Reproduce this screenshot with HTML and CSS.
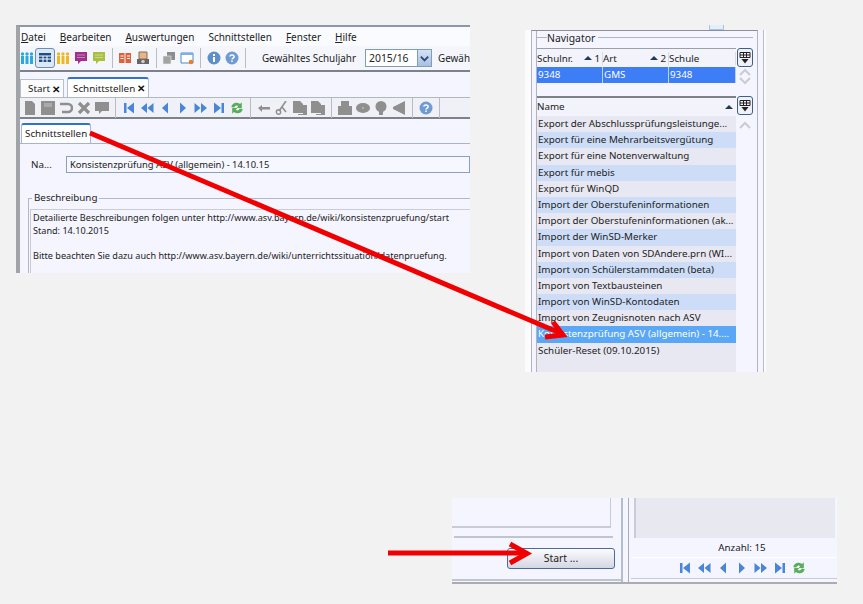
FILE: index.html
```html
<!DOCTYPE html>
<html>
<head>
    <title>Schnittstellen</title>
    <link rel="stylesheet" href="styles.css">
</head>
<body>
    <svg class="defs" width="0" height="0">
        <symbol id="first" viewBox="0 0 14 14"><path d="M2 2h2.500v10H2zM12 1.500v11L5 7z" fill="#4a86d8"/></symbol>
        <symbol id="fastback" viewBox="0 0 14 14"><path d="M7 2v10L1 7zM13.500 2v10L7.500 7z" fill="#4a86d8"/></symbol>
        <symbol id="prev" viewBox="0 0 14 14"><path d="M10 1.500v11L4 7z" fill="#4a86d8"/></symbol>
        <symbol id="next" viewBox="0 0 14 14"><path d="M4 1.500v11L10 7z" fill="#4a86d8"/></symbol>
        <symbol id="fastnext" viewBox="0 0 14 14"><path d="M.5 2v10L6.500 7zM7 2v10L13 7z" fill="#4a86d8"/></symbol>
        <symbol id="last" viewBox="0 0 14 14"><path d="M2 1.500v11L9 7zM9.500 2H12v10H9.500z" fill="#4a86d8"/></symbol>
        <symbol id="refresh" viewBox="0 0 16 16"><path d="M1.500 7C2 2.500 7.500 .5 11.500 3.500L13.500 1.500v6.500H7.500L9.500 6C7.500 4.500 5.500 5.500 5 7.500zM14.500 9c-.5 4.500-6 6.500-10 3.500L2.500 14.500V8h6L6.500 10c2 1.500 4 .5 4.500-1.500z" fill="#58ad58"/></symbol>
        <symbol id="people" viewBox="0 0 14 14"><path d="M1 5h3v8H1zM5.500 5h3v8h-3zM10 5h3v8h-3z" fill="currentColor"/><circle cx="2.500" cy="3" r="1.700" fill="currentColor"/><circle cx="7" cy="3" r="1.700" fill="currentColor"/><circle cx="11.500" cy="3" r="1.700" fill="currentColor"/></symbol>
        <symbol id="speech" viewBox="0 0 14 14"><path d="M1 1h12v9H7l-3 3v-3H1z" fill="currentColor"/><path d="M3 4h8M3 6.500h8" stroke="#fff" opacity=".4"/></symbol>
        <symbol id="table" viewBox="0 0 14 14"><path d="M1 2h12v9H1z" fill="#1d4f86"/><path d="M1 5h12M1 8h12M5 5v6M9 5v6" stroke="#fff"/></symbol>
        <symbol id="book" viewBox="0 0 14 14"><path d="M1 2h5.500v10H1zM7.500 2H13v10H7.500z" fill="#e0603a"/><path d="M2.500 5h3M2.500 7.500h3M9 5h3M9 7.500h3" stroke="#fff"/></symbol>
        <symbol id="camera" viewBox="0 0 14 14"><path d="M3 1h8v7H3z" fill="#e8b48a" stroke="#8a6a50"/><path d="M1 8h12v5H1z" fill="#666"/><circle cx="7" cy="10.500" r="1.800" fill="#ccc"/></symbol>
        <symbol id="docs" viewBox="0 0 14 14"><path d="M5 1h8v8H5z" fill="#8d8d8d"/><path d="M1 5h8v8H1z" fill="#a3a3a3" stroke="#eee" stroke-width=".6"/></symbol>
        <symbol id="window" viewBox="0 0 14 14"><path d="M1 2h12v10H1z" fill="#fff" stroke="#4a8ad0"/><path d="M1 2h12v2H1z" fill="#7fb0e4"/><circle cx="11" cy="11" r="2.300" fill="#e8802a"/></symbol>
        <symbol id="info" viewBox="0 0 14 14"><circle cx="7" cy="7" r="6.500" fill="#5f8fc8"/><path d="M6 6h2v5H6zM6 3h2v2H6z" fill="#fff"/></symbol>
        <symbol id="help" viewBox="0 0 14 14"><circle cx="7" cy="7" r="6.500" fill="#6f9ad2"/><path d="M4.800 5.500C5 3.500 9 3.500 9.200 5.500 9.300 7 7 7 7 8.500" fill="none" stroke="#fff" stroke-width="1.500"/><path d="M6.200 9.500h1.600v1.600H6.200z" fill="#fff"/></symbol>
        <symbol id="g-doc" viewBox="0 0 14 14"><path d="M2 0h7l3 3v11H2z" fill="#8f8f8f"/></symbol>
        <symbol id="g-save" viewBox="0 0 14 14"><path d="M0 0h14v14H0z" fill="#8f8f8f"/><path d="M3 3h8M3 5h8" stroke="#c6c6c6"/></symbol>
        <symbol id="g-undo" viewBox="0 0 14 14"><path d="M1 3h8a3.500 3.500 0 0 1 0 8H3" fill="none" stroke="#8f8f8f" stroke-width="2.600"/></symbol>
        <symbol id="g-x" viewBox="0 0 14 14"><path d="M2 2l10 10M12 2L2 12" stroke="#8f8f8f" stroke-width="3.200"/></symbol>
        <symbol id="g-chat" viewBox="0 0 14 14"><path d="M0 1h14v9H7l-3 3v-3H0z" fill="#8f8f8f"/></symbol>
        <symbol id="g-back" viewBox="0 0 14 14"><path d="M1 7l4-3v2h8v2.500H5V11z" fill="#8f8f8f"/></symbol>
        <symbol id="g-cut" viewBox="0 0 14 14"><path d="M11 0L4 10M7 6l4 5" stroke="#8f8f8f" stroke-width="1.600"/><circle cx="3.500" cy="11" r="2.200" fill="none" stroke="#8f8f8f" stroke-width="1.400"/></symbol>
        <symbol id="g-copy" viewBox="0 0 14 14"><path d="M0 0h7l3 3v9H0zM10 4h4v10H5v-1h5z" fill="#8f8f8f"/></symbol>
        <symbol id="g-print" viewBox="0 0 14 14"><path d="M3 0h8v5h3v9H0V5h3z" fill="#8f8f8f"/></symbol>
        <symbol id="g-disc" viewBox="0 0 14 14"><ellipse cx="7" cy="7" rx="7" ry="5" fill="#8f8f8f"/><circle cx="7" cy="7" r="1" fill="#bbb"/></symbol>
        <symbol id="g-bulb" viewBox="0 0 14 14"><circle cx="7" cy="5.500" r="5.500" fill="#8f8f8f"/><path d="M5 9h4v5H5z" fill="#8f8f8f"/></symbol>
        <symbol id="g-horn" viewBox="0 0 14 14"><path d="M13 0v14L1 8V6z" fill="#8f8f8f"/></symbol>
        <symbol id="columns" viewBox="0 0 14 14"><path d="M2 1.500h10v5H2zM2 4h10M5.500 1.500v5M8.500 1.500v5" fill="none" stroke="#222"/><path d="M3.500 8h7L7 12.500z" fill="#222"/></symbol>
        <symbol id="chev-up" viewBox="0 0 14 8"><path d="M2 7l5-5 5 5" fill="none" stroke="#c8ccd4" stroke-width="2"/></symbol>
        <symbol id="chev-down" viewBox="0 0 14 8"><path d="M2 1l5 5 5-5" fill="none" stroke="#c8ccd4" stroke-width="2"/></symbol>
        <symbol id="combo" viewBox="0 0 12 12"><path d="M2 4l4 4 4-4" fill="none" stroke="#2a4a7a" stroke-width="2"/></symbol>
    </svg>

    <div class="shot shot-main">
        <div class="menu">
            <span><u>D</u>atei</span>
            <span><u>B</u>earbeiten</span>
            <span><u>A</u>uswertungen</span>
            <span>Schnittstellen</span>
            <span><u>F</u>enster</span>
            <span><u>H</u>ilfe</span>
        </div>
        <div class="toolbar">
            <svg class="ic cyan"><use href="#people"/></svg>
            <span class="ic-btn"><svg class="ic"><use href="#table"/></svg></span>
            <svg class="ic yellow"><use href="#people"/></svg>
            <svg class="ic purple"><use href="#speech"/></svg>
            <svg class="ic lime"><use href="#speech"/></svg>
            <i class="sep"></i>
            <svg class="ic"><use href="#book"/></svg>
            <svg class="ic"><use href="#camera"/></svg>
            <i class="sep"></i>
            <svg class="ic"><use href="#docs"/></svg>
            <svg class="ic"><use href="#window"/></svg>
            <i class="sep"></i>
            <svg class="ic"><use href="#info"/></svg>
            <svg class="ic"><use href="#help"/></svg>
            <i class="sep"></i>
            <span class="year-label">Gewähltes Schuljahr</span>
            <span class="year-select"><span>2015/16</span><b><svg class="combo"><use href="#combo"/></svg></b></span>
            <span class="year-next">Gewäh</span>
        </div>
        <div class="tabs">
            <span class="tab">Start <em>✕</em></span>
            <span class="tab tab-active">Schnittstellen <em>✕</em></span>
        </div>
        <div class="toolbar toolbar-two">
            <svg class="ic"><use href="#g-doc"/></svg>
            <svg class="ic"><use href="#g-save"/></svg>
            <svg class="ic"><use href="#g-undo"/></svg>
            <svg class="ic"><use href="#g-x"/></svg>
            <svg class="ic"><use href="#g-chat"/></svg>
            <i class="sep"></i>
            <svg class="ic"><use href="#first"/></svg>
            <svg class="ic"><use href="#fastback"/></svg>
            <svg class="ic"><use href="#prev"/></svg>
            <svg class="ic"><use href="#next"/></svg>
            <svg class="ic"><use href="#fastnext"/></svg>
            <svg class="ic"><use href="#last"/></svg>
            <svg class="ic"><use href="#refresh"/></svg>
            <i class="sep"></i>
            <svg class="ic"><use href="#g-back"/></svg>
            <svg class="ic"><use href="#g-cut"/></svg>
            <svg class="ic"><use href="#g-copy"/></svg>
            <svg class="ic"><use href="#g-copy"/></svg>
            <i class="sep"></i>
            <svg class="ic"><use href="#g-print"/></svg>
            <svg class="ic"><use href="#g-disc"/></svg>
            <svg class="ic"><use href="#g-bulb"/></svg>
            <svg class="ic"><use href="#g-horn"/></svg>
            <i class="sep"></i>
            <svg class="ic"><use href="#help"/></svg>
            <i class="sep"></i>
        </div>
        <div class="subtabs"><span class="subtab">Schnittstellen</span></div>
        <div class="name-row">
            <label>Na...</label>
            <div class="name-input">Konsistenzprüfung ASV (allgemein) - 14.10.15</div>
        </div>
        <div class="group">
            <span class="group-title">Beschreibung</span>
            <div class="desc">
                <p>Detailierte Beschreibungen folgen unter http://www.asv.bayern.de/wiki/konsistenzpruefung/start</p>
                <p>Stand: 14.10.2015</p>
                <p class="gap">Bitte beachten Sie dazu auch http://www.asv.bayern.de/wiki/unterrichtssituation/datenpruefung.</p>
            </div>
        </div>
    </div>

    <div class="nav-top"></div>
    <div class="shot shot-nav">
        <div class="nav-inner">
            <div class="nav-group">
                <div class="nav-title"><span>Navigator</span></div>
                <div class="grid-row">
                    <div class="grid">
                        <div class="grid-head">
                            <span>Schulnr.<em><i class="up"></i>1</em></span>
                            <span>Art<em><i class="up"></i>2</em></span>
                            <span>Schule</span>
                        </div>
                        <div class="grid-body">
                            <span>9348</span><span>GMS</span><span>9348</span>
                        </div>
                    </div>
                    <div class="side">
                        <span class="col-btn"><svg class="ic"><use href="#columns"/></svg></span>
                        <svg class="chev"><use href="#chev-up"/></svg>
                        <svg class="chev"><use href="#chev-down"/></svg>
                    </div>
                </div>
                <div class="grid-row list-row">
                    <div class="grid">
                        <div class="grid-head name-head"><span>Name<em><i class="up"></i></em></span></div>
                        <ul class="list">
                            <li>Export der Abschlussprüfungsleistunge...</li>
                            <li>Export für eine Mehrarbeitsvergütung</li>
                            <li>Export für eine Notenverwaltung</li>
                            <li>Export für mebis</li>
                            <li>Export für WinQD</li>
                            <li>Import der Oberstufeninformationen</li>
                            <li>Import der Oberstufeninformationen (ak...</li>
                            <li>Import der WinSD-Merker</li>
                            <li>Import von Daten von SDAndere.prn (WI...</li>
                            <li>Import von Schülerstammdaten (beta)</li>
                            <li>Import von Textbausteinen</li>
                            <li>Import von WinSD-Kontodaten</li>
                            <li>Import von Zeugnisnoten nach ASV</li>
                            <li class="selected">Konsistenzprüfung ASV (allgemein) - 14....</li>
                            <li>Schüler-Reset (09.10.2015)</li>
                        </ul>
                    </div>
                    <div class="side">
                        <span class="col-btn"><svg class="ic"><use href="#columns"/></svg></span>
                        <svg class="chev chev-list"><use href="#chev-up"/></svg>
                    </div>
                </div>
            </div>
        </div>
    </div>

    <div class="shot shot-start">
        <div class="start-left">
            <div class="start-box"></div>
            <div class="start-actions"><span class="start-btn">Start ...</span></div>
        </div>
        <div class="start-right">
            <div class="start-list"></div>
            <div class="count">Anzahl: 15</div>
            <div class="toolbar nav-icons">
                <svg class="ic"><use href="#first"/></svg>
                <svg class="ic"><use href="#fastback"/></svg>
                <svg class="ic"><use href="#prev"/></svg>
                <svg class="ic"><use href="#next"/></svg>
                <svg class="ic"><use href="#fastnext"/></svg>
                <svg class="ic"><use href="#last"/></svg>
                <svg class="ic"><use href="#refresh"/></svg>
            </div>
        </div>
    </div>

    <svg class="arrows" width="863" height="604">
        <g fill="none" stroke="#f00000" stroke-width="5">
            <path d="M90 133L560 333"/>
            <path d="M553 322L563 335L545 337"/>
            <path d="M388 553H526"/>
            <path d="M510 544L527 553.500L510 563"/>
        </g>
    </svg>
</body>
</html>
```

FILE: styles.css
```css
html, body {
    margin: 0;
    padding: 0;
}
body {
    position: relative;
    width: 863px;
    height: 604px;
    overflow: hidden;
    background-color: #f2f2f2;
    font-family: "Noto Sans", sans-serif;
    font-size: 9.8px;
    color: #222;
}
.defs {
    position: absolute;
}
.arrows {
    position: absolute;
    left: 0;
    top: 0;
}
.shot {
    position: absolute;
    box-sizing: border-box;
    background-color: #f4f5fe;
    overflow: hidden;
}
.ic {
    width: 14px;
    height: 14px;
    flex: none;
}
.cyan { color: #2aa8e0; }
.yellow { color: #f0b820; }
.purple { color: #a0308a; }
.lime { color: #a8c040; }

/* main window */
.shot-main {
    left: 16px;
    top: 25px;
    width: 454px;
    height: 248px;
    border-top: 2px solid #8c98a4;
    border-left: 4px solid #a0a4a8;
}
.menu {
    display: flex;
    height: 19px;
    align-items: center;
    gap: 14px;
    padding-left: 1px;
    font-size: 10px;
    background-color: #fafbff;
}
.toolbar {
    display: flex;
    align-items: center;
    gap: 4px;
}
.shot-main > .toolbar {
    height: 26px;
    border-bottom: 2px solid #7c8288;
    box-sizing: border-box;
    background-color: #f4f6fc;
}
.ic-btn {
    display: flex;
    margin: 0 -3px;
    padding: 2px;
    border: 1px solid #6c8cb0;
    border-radius: 3px;
    background-color: #dce8f6;
}
.sep {
    width: 1px;
    height: 20px;
    margin: 0 2px;
    background-color: #b8bcc4;
}
.year-label {
    margin-left: 11px;
    white-space: nowrap;
    font-size: 9.9px;
}
.year-select {
    display: flex;
    flex: none;
    width: 67px;
    height: 18px;
    margin: 0 2px 0 5px;
    box-sizing: border-box;
    border: 1px solid #7f9db9;
    background-color: #fff;
    align-items: center;
    padding-left: 3px;
    justify-content: space-between;
    font-size: 10.4px;
}
.year-select b {
    display: flex;
    align-items: center;
    justify-content: center;
    width: 13px;
    height: 16px;
    background: linear-gradient(#d6e2f4, #a8c0e0);
    border-left: 1px solid #7f9db9;
}
.combo {
    width: 11px;
    height: 11px;
}
.year-next {
    font-size: 9.9px;
}
.tabs {
    display: flex;
    height: 25px;
    align-items: flex-end;
    gap: 3px;
    padding-left: 0;
    background-color: #f4f5fe;
}
.tab {
    display: flex;
    align-items: center;
    gap: 2px;
    height: 17px;
    padding: 0 3px 0 7px;
    border: 1px solid #b4c0d0;
    border-bottom: none;
    background-color: #fcfcff;
}
.tab em {
    font-style: normal;
    font-weight: bold;
    font-size: 10px;
    color: #111;
}
.tab-active {
    height: 18px;
    padding-left: 5px;
    border-top: 2px solid #2f72d0;
    border-radius: 3px 3px 0 0;
    background-color: #fff;
}
.shot-main > .toolbar-two {
    height: 22px;
    padding-left: 3px;
    border-top: 1px solid #b0b8c0;
    background-color: #f0f1f6;
}
.subtabs {
    display: flex;
    height: 24px;
    align-items: flex-end;
    padding-left: 1px;
    border-bottom: 1px solid #a8b4c8;
}
.subtab {
    height: 18px;
    padding: 0 3px;
    border: 1px solid #a8b8d0;
    border-top: 2px solid #2f72d0;
    border-bottom: none;
    border-radius: 3px 3px 0 0;
    background-color: #fff;
    line-height: 17px;
}
.name-row {
    display: flex;
    align-items: center;
    margin-top: 12px;
    padding-left: 11px;
}
.name-row label {
    width: 35px;
}
.name-input {
    flex: 1;
    height: 17px;
    box-sizing: border-box;
    border: 1px solid #8aa0c0;
    padding-left: 3px;
    line-height: 15px;
    font-size: 9.4px;
    background-color: #f6f7ff;
    white-space: nowrap;
}
.group {
    position: relative;
    margin: 25px 0 0 8px;
    border-top: 1px solid #b4b8c4;
    border-left: 1px solid #b4b8c4;
    padding: 10px 0 0 1px;
}
.group-title {
    position: absolute;
    left: 3px;
    top: -8px;
    padding: 0 2px;
    background-color: #f4f5fe;
}
.desc {
    border-top: 1px solid #c8ccd4;
    border-left: 1px solid #c8ccd4;
    padding: 1px 0 0 2px;
    height: 65px;
    font-size: 9.1px;
    white-space: nowrap;
}
.desc p {
    margin: 0;
    height: 13px;
    line-height: 13px;
}
.desc .gap {
    margin-top: 12px;
}

/* navigator */
.nav-top {
    position: absolute;
    left: 709px;
    top: 25px;
    width: 13px;
    height: 4px;
    border: 1px solid #a8c4e0;
    border-top: none;
    background-color: #e4eef8;
}
.shot-nav {
    left: 525px;
    top: 30px;
    width: 241px;
    height: 342px;
    background-color: #fcfcff;
    padding-left: 6px;
}
.nav-inner {
    width: 227px;
    height: 342px;
    box-sizing: border-box;
    border-left: 1px solid #b0b4c0;
    border-right: 1px solid #b0b4c0;
    border-top: 1px solid #8c9098;
    background-color: #f4f5fe;
    padding: 6px 0 0 4px;
    box-shadow: 5px 0 0 #f4f5fe, 6px 0 0 #b8bcc4;
}
.nav-group {
    border-left: 1px solid #b0b4c0;
    margin-right: 4px;
}
.nav-title {
    display: flex;
    align-items: center;
    height: 13px;
    margin-top: -6px;
}
.nav-title::before {
    content: "";
    width: 10px;
    border-top: 1px solid #b0b4c0;
}
.nav-title::after {
    content: "";
    flex: 1;
    border-top: 1px solid #b0b4c0;
}
.nav-title span {
    padding: 0 3px 0 0;
    font-size: 10.4px;
}
.grid-row {
    display: flex;
    gap: 1px;
    margin-top: 4px;
}
.list-row {
    margin-top: 11px;
}
.grid {
    width: 199px;
    flex: none;
}
.grid-head {
    display: grid;
    grid-template-columns: 66px 66px 67px;
    height: 19px;
    box-sizing: border-box;
    border-top: 1px solid #9aa0a8;
    align-items: center;
    background-color: #f2f3fb;
}
.grid-head span {
    display: flex;
    justify-content: space-between;
    padding-right: 2px;
    border-right: 1px solid #d8dae4;
}
.grid-head em {
    display: flex;
    align-items: center;
    gap: 2px;
    font-style: normal;
}
.up {
    width: 0;
    height: 0;
    border-left: 4px solid transparent;
    border-right: 4px solid transparent;
    border-bottom: 4px solid #223a5a;
}
.name-head {
    grid-template-columns: 1fr;
    border-top: 2px solid #7c8288;
}
.name-head span {
    padding-right: 3px;
    border: none;
}
.grid-body {
    display: grid;
    grid-template-columns: 66px 66px 67px;
    height: 16px;
    background-color: #3d7df5;
    color: #fff;
    line-height: 16px;
}
.grid-body span {
    padding-left: 1px;
    border-right: 1px solid #bcd0f4;
}
.side {
    display: flex;
    flex-direction: column;
    align-items: center;
    width: 16px;
}
.col-btn {
    display: flex;
    width: 16px;
    height: 19px;
    box-sizing: border-box;
    align-items: center;
    justify-content: center;
    border: 1px solid #3f5f86;
    border-radius: 3px;
    background-color: #eef1f8;
}
.chev {
    width: 14px;
    height: 8px;
    margin-top: 1px;
}
.chev-list {
    margin-top: 6px;
}
.list {
    margin: 1px 0 0;
    padding: 0;
    list-style: none;
    background-color: #e8e8f2;
    height: 256px;
    overflow: hidden;
}
.list li {
    height: 16.2px;
    line-height: 16px;
    padding-left: 1px;
    white-space: nowrap;
}
.list li:nth-child(even) {
    background-color: #cdddf7;
}
.list li.selected {
    background-color: #5aa8f5;
    color: #fff;
}

/* start area */
.shot-start {
    left: 452px;
    top: 498px;
    width: 385px;
    height: 86px;
    display: flex;
    background-color: #f4f5fe;
    border-bottom: 2px solid #a8acb4;
}
.start-left {
    width: 169px;
    flex: none;
    border-bottom: 2px solid #c0c4cc;
    height: 83px;
    box-sizing: border-box;
}
.start-box {
    width: 158px;
    height: 28px;
    border-right: 1px solid #c8ccd4;
    border-bottom: 2px solid #c8ccd4;
    box-shadow: 2px 8px 0 #f4f5fe, 2px 10px 0 #c0c4cc;
}
.start-actions {
    display: flex;
    padding: 20px 0 0 55px;
}
.start-btn {
    width: 108px;
    height: 21px;
    box-sizing: border-box;
    border: 1px solid #4a6c9c;
    border-radius: 3px;
    background: linear-gradient(#fcfcfe, #d4d6e2);
    text-align: center;
    line-height: 19px;
    font-size: 10.4px;
}
.start-right {
    flex: 1;
    border-left: 2px solid #b4bcd0;
    padding-left: 8px;
    background-color: #f4f5fe;
    box-shadow: inset 5px 0 0 #f4f5fe, inset 6px 0 0 #a8acb4;
}
.start-list {
    margin-left: 3px;
    width: 199px;
    height: 40px;
    border-left: 2px solid #c8ccd4;
    background-color: #e8e8f0;
}
.count {
    height: 18px;
    margin-top: 1px;
    padding-left: 16px;
    text-align: center;
    line-height: 17px;
    border-bottom: 1px solid #fff;
}
.nav-icons {
    justify-content: center;
    gap: 5px;
    padding-left: 16px;
    height: 20px;
    border-bottom: 1px solid #c8ccd4;
}
```
